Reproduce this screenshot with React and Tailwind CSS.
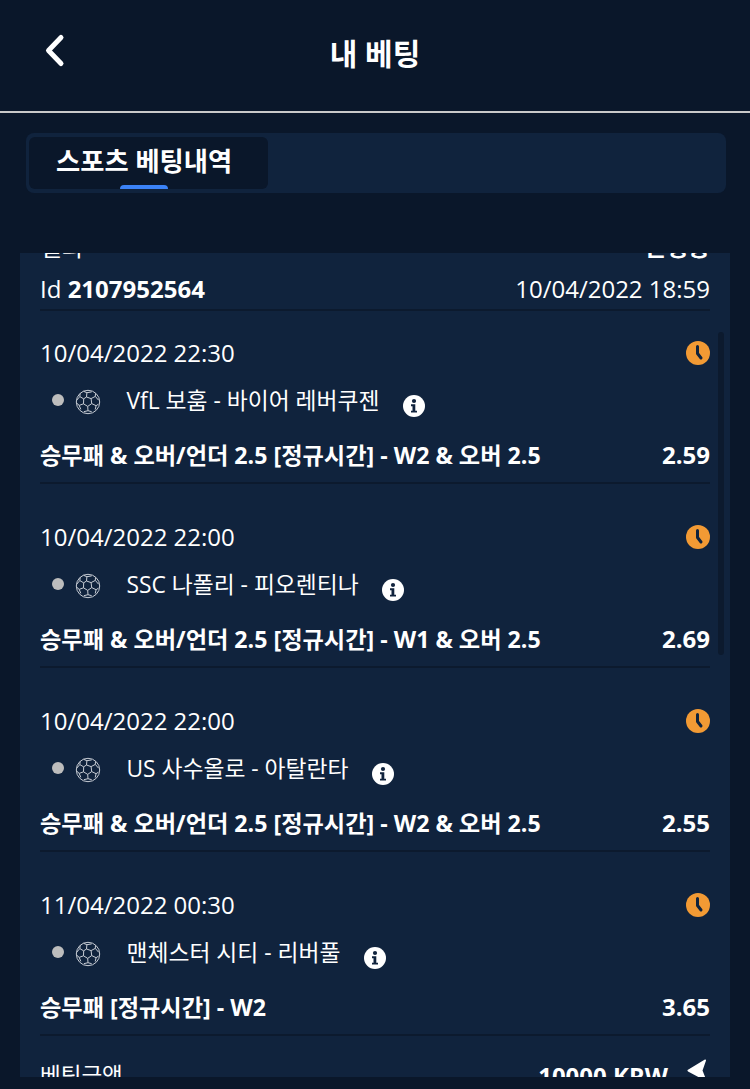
const SANS = "font-['Open_Sans','Noto_Sans_CJK_KR',sans-serif]";

function SoccerBall() {
  return (
    <svg width="26" height="26" viewBox="0 0 26 26" fill="none" stroke="#c8cdd5" strokeWidth="1" className="shrink-0">
      <circle cx="13" cy="13" r="11.7" />
      <path d="M11.500 8l4.600 1.600.6 5-4 2.800-4.200-2.600.2-5z" />
      <path d="M11.500 8l.4-4.300-3.400-1.400M11.900 3.700l4.800-.8M16.100 9.600l4.200-2.200.2-3M20.300 7.400l3.300 3.800M16.700 14.600l4.400 2.100 2.300-1.500M21.100 16.700l-.9 3.800M12.700 17.400l.3 4.300 3.700 1M13 21.700l-4.200 1M8.500 14.800l-4.300 1.600-2.200-2M4.200 16.400l1.600 4M8.600 9.800L4.800 7.600l-3 3.500M4.800 7.600l.4-3.200" />
    </svg>
  );
}

function InfoIcon() {
  return (
    <svg width="22" height="22" viewBox="0 0 22 22" className="shrink-0">
      <circle cx="11" cy="11" r="11" fill="#fff" />
      <circle cx="11" cy="6" r="2.100" fill="#10233d" />
      <path d="M8 9.300h4.300v6.400H14v1.900H8v-1.900h1.500v-4.500H8z" fill="#10233d" />
    </svg>
  );
}

function ClockIcon() {
  return (
    <svg width="24" height="24" viewBox="0 0 24 24" className="shrink-0">
      <circle cx="12" cy="12" r="12" fill="#f29a34" />
      <path d="M11.500 5.500v7l3.500 4.500" fill="none" stroke="#10233d" strokeWidth="3" strokeLinecap="round" strokeLinejoin="round" />
    </svg>
  );
}

function BetRow({ date, match, market, odd }) {
  return (
    <div className="mb-[31px] border-b-2 border-[#0c1a2e]">
      <div className="flex h-[44px] items-center justify-between">
        <span>{date}</span>
        <ClockIcon />
      </div>
      <div className="flex h-[50px] items-center pl-3">
        <span className="h-3 w-3 shrink-0 rounded-full bg-[#bdbdbd]" />
        <span className="ml-[11px] mt-1"><SoccerBall /></span>
        <span className="ml-[25.500px] mt-0.5 text-[22.800px] leading-none">{match}</span>
        <span className="ml-[23.500px] mt-[11px]"><InfoIcon /></span>
      </div>
      <div className="flex h-[57px] items-center justify-between pt-1 font-bold">
        <span className="text-[23.200px]">{market}</span>
        <span className="-mt-0.5">{odd}</span>
      </div>
    </div>
  );
}

const rows = [
  { date: "10/04/2022 22:30", match: "VfL 보훔 - 바이어 레버쿠젠", market: "승무패 & 오버/언더 2.5 [정규시간] - W2 & 오버 2.5", odd: "2.59" },
  { date: "10/04/2022 22:00", match: "SSC 나폴리 - 피오렌티나", market: "승무패 & 오버/언더 2.5 [정규시간] - W1 & 오버 2.5", odd: "2.69" },
  { date: "10/04/2022 22:00", match: "US 사수올로 - 아탈란타", market: "승무패 & 오버/언더 2.5 [정규시간] - W2 & 오버 2.5", odd: "2.55" },
  { date: "11/04/2022 00:30", match: "맨체스터 시티 - 리버풀", market: "승무패 [정규시간] - W2", odd: "3.65" },
];

export default function App() {
  return (
    <div className={`${SANS} flex h-[1089px] w-[750px] flex-col overflow-hidden bg-[#0a172a] text-white`}>
      <header className="relative flex h-[111px] shrink-0 items-center justify-center">
        <svg width="24" height="36" viewBox="0 0 24 36" className="absolute left-[41px] top-[32px]">
          <path d="M20 5.500L7.500 18.500 20 31.500" fill="none" stroke="#fff" strokeWidth="5" strokeLinecap="round" strokeLinejoin="round" />
        </svg>
        <h1 className="-mt-1 text-[30px] font-bold leading-none">내 베팅</h1>
      </header>
      <div className="h-0.5 shrink-0 bg-[#c9c9c9]" />
      <div className="ml-[26px] mr-6 mt-5 flex h-[60px] shrink-0 rounded-lg bg-[#10233d] px-[3px] py-1">
        <div className="relative flex w-[239px] items-center justify-start rounded-md bg-[#0a172a] pl-[27px] text-[26.300px] font-bold leading-none">
          <span className="-mt-1">스포츠 베팅내역</span>
          <span className="absolute bottom-0 left-[91px] h-1 w-12 rounded-t-sm bg-[#3b82f6]" />
        </div>
      </div>
      <main className="relative mx-5 mt-[60px] flex h-[824px] shrink-0 flex-col overflow-hidden bg-[#10233d] px-5 text-2xl">
        <div className="-mt-[31px] mb-2 flex h-[37px] shrink-0 items-end justify-between leading-none">
          <span>결과</span>
          <span className="font-bold">진행중</span>
        </div>
        <div className="flex h-[44px] shrink-0 items-center justify-between border-b-2 border-[#0c1a2e] pt-0.5">
          <span>Id <b>2107952564</b></span>
          <span>10/04/2022 18:59</span>
        </div>
        <div className="mt-5 shrink-0">
          {rows.map((r) => (
            <BetRow key={r.odd} {...r} />
          ))}
        </div>
        <div className="-mt-[7px] flex items-center justify-between pr-[3px]">
          <span className="text-[22.500px]">베팅금액</span>
          <span className="flex items-center gap-[19px] font-bold">
            10000 KRW
            <svg width="20" height="22" viewBox="0 0 20 22" className="-mt-3"><path d="M18 1.500L1.500 11.500 18 20.500 14.500 11.500z" fill="#fff" stroke="#fff" strokeWidth="2" strokeLinejoin="round" /></svg>
          </span>
        </div>
        <div className="absolute left-[698px] top-[79px] h-[323px] w-1.5 rounded-full bg-[#0c1a2e]" />
      </main>
    </div>
  );
}
